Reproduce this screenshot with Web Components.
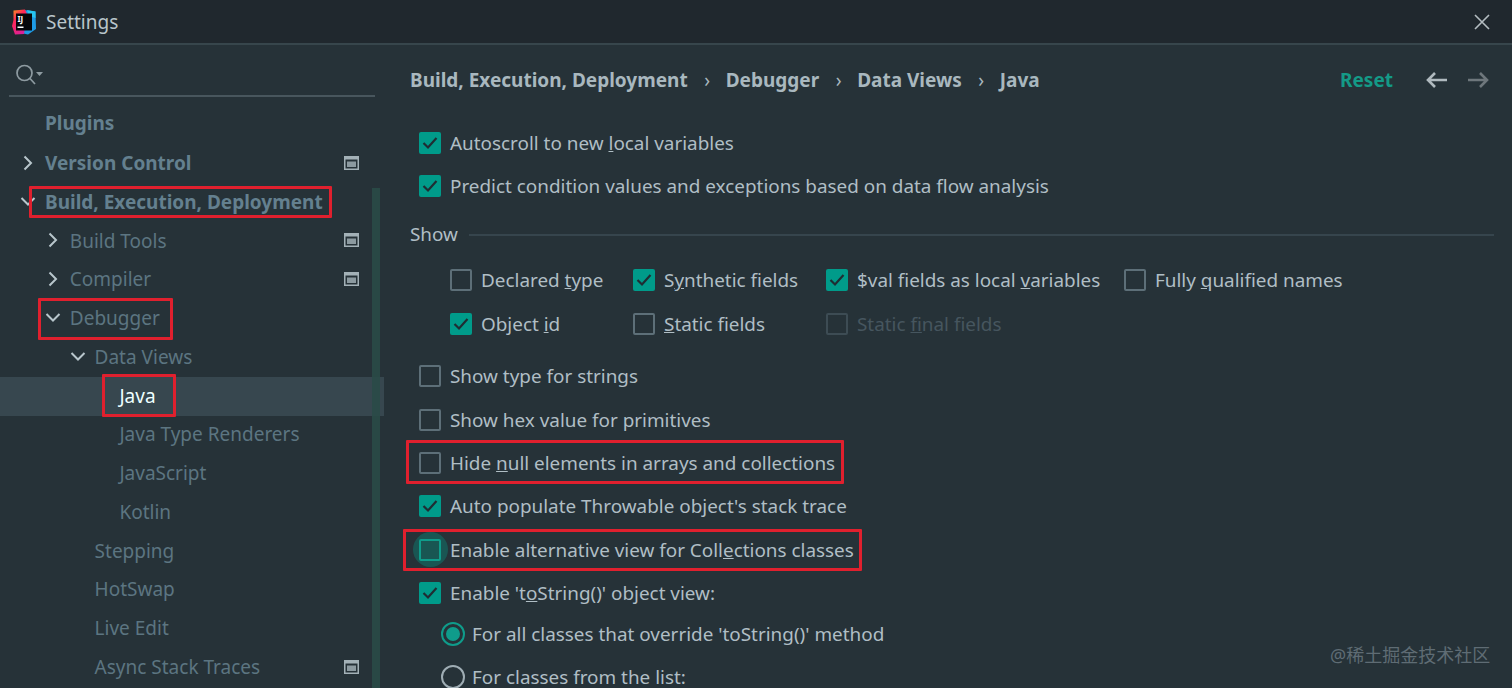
<!DOCTYPE html>
<html lang="en"><head><meta charset="utf-8"><title>Settings</title>
<style>
html,body{margin:0;height:100%;background:#263238;overflow:hidden}
body{font:18.9px "Noto Sans","Noto Sans CJK SC",sans-serif;color:#b0bec5}
</style></head><body>
<settings-app>
  <title-bar slot="title"></title-bar>
  <side-panel slot="side">
    <tree-row label="Plugins" level="0" bold style="margin:-1.5px 0 1.5px"></tree-row>
    <tree-row label="Version Control" level="0" bold chevron="right" store></tree-row>
    <tree-row label="Build, Execution, Deployment" level="0" bold chevron="down"></tree-row>
    <tree-row label="Build Tools" level="1" chevron="right" store></tree-row>
    <tree-row label="Compiler" level="1" chevron="right" store></tree-row>
    <tree-row label="Debugger" level="1" chevron="down"></tree-row>
    <tree-row label="Data Views" level="2" chevron="down"></tree-row>
    <tree-row label="Java" level="3" selected></tree-row>
    <tree-row label="Java Type Renderers" level="3"></tree-row>
    <tree-row label="JavaScript" level="3"></tree-row>
    <tree-row label="Kotlin" level="3"></tree-row>
    <tree-row label="Stepping" level="2"></tree-row>
    <tree-row label="HotSwap" level="2"></tree-row>
    <tree-row label="Live Edit" level="2"></tree-row>
    <tree-row label="Async Stack Traces" level="2" store></tree-row>
  </side-panel>
  <main-panel slot="main">
    <bread-crumbs></bread-crumbs>
    <option-group style="margin-top:5px">
      <check-row checked>Autoscroll to new <u>l</u>ocal variables</check-row>
      <check-row checked>Predict condition values and exceptions based on data flow analysis</check-row>
    </option-group>
    <section-title style="margin-top:11px">Show</section-title>
    <show-grid style="margin-top:10px">
      <check-row>Declared <u>t</u>ype</check-row>
      <check-row checked>S<u>y</u>nthetic fields</check-row>
      <check-row checked>$val fields as local <u>v</u>ariables</check-row>
      <check-row>Fully <u>q</u>ualified names</check-row>
      <check-row checked>Object <u>i</u>d</check-row>
      <check-row><u>S</u>tatic fields</check-row>
      <check-row disabled>Static <u>f</u>inal fields</check-row>
    </show-grid>
    <option-group style="margin-top:9px">
      <check-row>Show type for strings</check-row>
      <check-row>Show hex value for primitives</check-row>
      <check-row>Hide <u>n</u>ull elements in arrays and collections</check-row>
      <check-row checked>Auto populate Throwable object's stack trace</check-row>
      <check-row focused>Enable alternative view for Coll<u>e</u>ctions classes</check-row>
      <check-row checked>Enable 't<u>o</u>String()' object view:</check-row>
    </option-group>
    <radio-group>
      <radio-row checked>For all classes that override 'toString()' method</radio-row>
      <radio-row>For classes from the list:</radio-row>
    </radio-group>
  </main-panel>
  <mark-box slot="over" style="left:29px;top:186px;width:303px;height:32px"></mark-box>
  <mark-box slot="over" style="left:38px;top:298px;width:135px;height:42px"></mark-box>
  <mark-box slot="over" style="left:102px;top:374px;width:74px;height:43px"></mark-box>
  <mark-box slot="over" style="left:406px;top:440px;width:438px;height:44px"></mark-box>
  <mark-box slot="over" style="left:403px;top:529px;width:459px;height:42px"></mark-box>
  <water-mark slot="over">@稀土掘金技术社区</water-mark>
</settings-app>
<script>
function el(name, html){
  customElements.define(name, class extends HTMLElement{
    constructor(){super();this.attachShadow({mode:'open'}).innerHTML=html(this)}
  });
}
const CHEV={
  right:'<path d="M4.5 1.5 11 8l-6.500 6.500"/>',
  down:'<path d="M1.500 4 8 10.500 14.500 4"/>'
};
el('settings-app',()=>`<style>
:host{display:flex;flex-direction:column;position:relative;width:1512px;height:688px;overflow:hidden;background:#263238}
.body{flex:1;display:grid;grid-template-columns:384px 1fr;min-height:0}
</style><slot name="title"></slot><div class="body"><slot name="side"></slot><slot name="main"></slot></div><slot name="over"></slot>`);
el('title-bar',()=>`<style>
:host{display:flex;align-items:center;height:43px;flex:none;box-sizing:content-box;background:#20282e;border-bottom:2px solid #37464c;margin-bottom:-1px;padding:0 22px 0 10px;color:#b9c5ca;font-size:19px}
svg.logo{width:27px;height:28px;margin-right:9px;flex:none}
span{flex:1}
svg.x{width:16px;height:16px;fill:none;stroke:#b4bdc1;stroke-width:1.6}
</style>
<svg class="logo" viewBox="0 0 27 28">
<defs><linearGradient id="g" x1="0" y1="0" x2=".6" y2="1"><stop offset="0" stop-color="#f9a01a"/><stop offset=".4" stop-color="#fe2857"/><stop offset="1" stop-color="#d9209a"/></linearGradient></defs>
<path d="M14 2 25.500 3.500 26 21 18 26.500 11 25Z" fill="#1e9be6"/>
<path d="M17 2 25.500 3.500 25.500 10 19 8Z" fill="#27c4ef"/>
<path d="M3.500 2.500 15 1.500 17 6 14 26 5 26.500 2 18 3.500 12Z" fill="url(#g)"/>
<rect x="6" y="5.500" width="16" height="17" fill="#05070a"/>
<text x="7.500" y="14" font-size="8" font-weight="700" font-family="Noto Sans" fill="#fff">IJ</text>
<rect x="7.500" y="18.500" width="6" height="1.500" fill="#fff"/>
</svg>
<span>Settings</span>
<svg class="x" viewBox="0 0 16 16"><path d="M1 1 15 15M15 1 1 15"/></svg>`);
el('side-panel',()=>`<style>
:host{display:block;position:relative;overflow:hidden}
.search{height:53px;margin:0 9px;border-bottom:2px solid #48565d;box-sizing:border-box;display:flex;align-items:center;padding:10px 0 0 6px}
svg{width:28px;height:24px;fill:none;stroke:#8e9ba1;stroke-width:1.7}
.list{padding-top:9px}
.bar{position:absolute;left:372px;top:144px;width:8px;bottom:0;background:#2a4a47;opacity:.9}
</style>
<div class="search"><svg viewBox="0 0 28 24"><circle cx="9.500" cy="10" r="7.500"/><path d="M15 15.500 20 21"/><path d="M21 9h7l-3.500 4z" fill="#8e9ba1" stroke="none"/></svg></div>
<div class="list"><slot></slot></div><div class="bar"></div>`);
el('tree-row',h=>{
  const lv=+h.getAttribute('level')||0, bold=h.hasAttribute('bold'), sel=h.hasAttribute('selected'), c=h.getAttribute('chevron');
  return `<style>
:host{display:flex;align-items:center;height:38.75px;position:relative;padding:0 0 2px ${45+lv*24.8}px;box-sizing:border-box;
font-weight:${bold?700:400};font-size:19px;color:${sel?'#eeffff':(lv===0?'#64808f':'#5c7581')};${sel?'background:#37474f;':''}}
svg.c{position:absolute;left:${20+lv*24.9}px;top:10px;width:16px;height:16px;fill:none;stroke:#b8c6cc;stroke-width:2}
svg.s{position:absolute;left:344px;top:11px;width:15px;height:14px}
</style>
${c?`<svg class="c" viewBox="0 0 16 16">${CHEV[c]}</svg>`:''}
<span>${h.getAttribute('label')}</span>
${h.hasAttribute('store')?`<svg class="s" viewBox="0 0 15 14"><rect x=".75" y=".75" width="13.500" height="12.500" fill="none" stroke="#a3b1b7" stroke-width="1.500"/><rect x="1" y="1" width="13" height="2.500" fill="#a3b1b7"/><rect x="3" y="5.500" width="9" height="5.500" fill="#8c9aa0"/></svg>`:''}`;
});
el('main-panel',()=>`<style>:host{display:block;padding-left:26px;min-width:0}</style><slot></slot>`);
el('bread-crumbs',()=>`<style>
:host{display:flex;align-items:center;height:72px;padding:0 23px 0 0;box-sizing:border-box;font-weight:700;font-size:19px;color:#a9b8bf}
i{font-style:normal;font-weight:400;width:38px;text-align:center;padding-left:1px;box-sizing:border-box}
.r{flex:1}
.reset{color:#149a87;margin-right:33px}
svg{width:22px;height:16px;fill:none;stroke-width:2.600}
svg+svg{margin-left:19px}
</style>
<span>Build, Execution, Deployment</span><i>›</i><span>Debugger</span><i>›</i><span>Data Views</span><i>›</i><span>Java</span><span class="r"></span>
<span class="reset">Reset</span>
<svg viewBox="0 0 22 16" stroke="#b0babf"><path d="M21 8H2M9 1 2 8l7 7"/></svg>
<svg viewBox="0 0 22 16" stroke="#6e777c"><path d="M1 8h19M13 1l7 7-7 7"/></svg>`);
el('option-group',()=>`<style>:host{display:block;padding-left:9px}</style><slot></slot>`);
el('show-grid',()=>`<style>:host{display:grid;grid-template-columns:183px 193px 298px auto;margin-left:40px}</style><slot></slot>`);
el('radio-group',()=>`<style>:host{display:flex;flex-direction:column;gap:7px;margin:.6px 0 0 31px}</style><slot></slot>`);
el('check-row',h=>{
  const ck=h.hasAttribute('checked'),dis=h.hasAttribute('disabled'),foc=h.hasAttribute('focused');
  return `<style>
:host{display:flex;align-items:center;height:43.4px;color:${dis?'#46565f':'#b0bec5'};white-space:nowrap}
.b{width:22px;height:22px;box-sizing:border-box;flex:none;margin-right:9px;border-radius:2px;position:relative;
${ck?'background:#009b8a;':`border:2px solid ${dis?'#3d4c54':foc?'#0f9c8b':'#5d6f78'};`}}
${foc?'.b::before{content:"";position:absolute;left:-8.5px;top:-8.5px;width:35px;height:35px;border-radius:50%;background:#15635c;opacity:.75;z-index:-1}':''}
svg{position:absolute;left:3px;top:4px;width:16px;height:14px;fill:none;stroke:#1f2d33;stroke-width:2.2}
u{text-underline-offset:3px}
.w{position:relative;z-index:0;display:flex;align-items:center}
</style><div class="w"><div class="b">${ck?'<svg viewBox="0 0 16 14"><path d="M1.500 7 6 11.500 14.500 2"/></svg>':''}</div><span><slot></slot></span></div>`;
});
el('radio-row',h=>`<style>
:host{display:flex;align-items:center;height:36px;white-space:nowrap}
.o{width:24px;height:24px;border-radius:50%;box-sizing:border-box;border:2px solid ${h.hasAttribute('checked')?'#0f9c8b':'#9fadb4'};margin-right:7px;flex:none;display:flex;align-items:center;justify-content:center}
.o b{width:14px;height:14px;border-radius:50%;background:#0f9c8b}
</style><div class="o">${h.hasAttribute('checked')?'<b></b>':''}</div><span><slot></slot></span>`);
el('section-title',()=>`<style>
:host{display:flex;align-items:center;height:30px}
i{flex:1;height:2px;background:#36454d;margin:2px 18px 0 11px}
</style><span><slot></slot></span><i></i>`);
el('mark-box',()=>`<style>:host{display:block;position:absolute;box-sizing:border-box;border:3px solid #e0202e;border-radius:1px}</style>`);
el('water-mark',()=>`<style>:host{display:block;position:absolute;left:1330px;top:642px;font:18px/26px "Noto Sans","Noto Sans CJK SC",sans-serif;color:#5f6c74}</style><slot></slot>`);
</script>
</body></html>
